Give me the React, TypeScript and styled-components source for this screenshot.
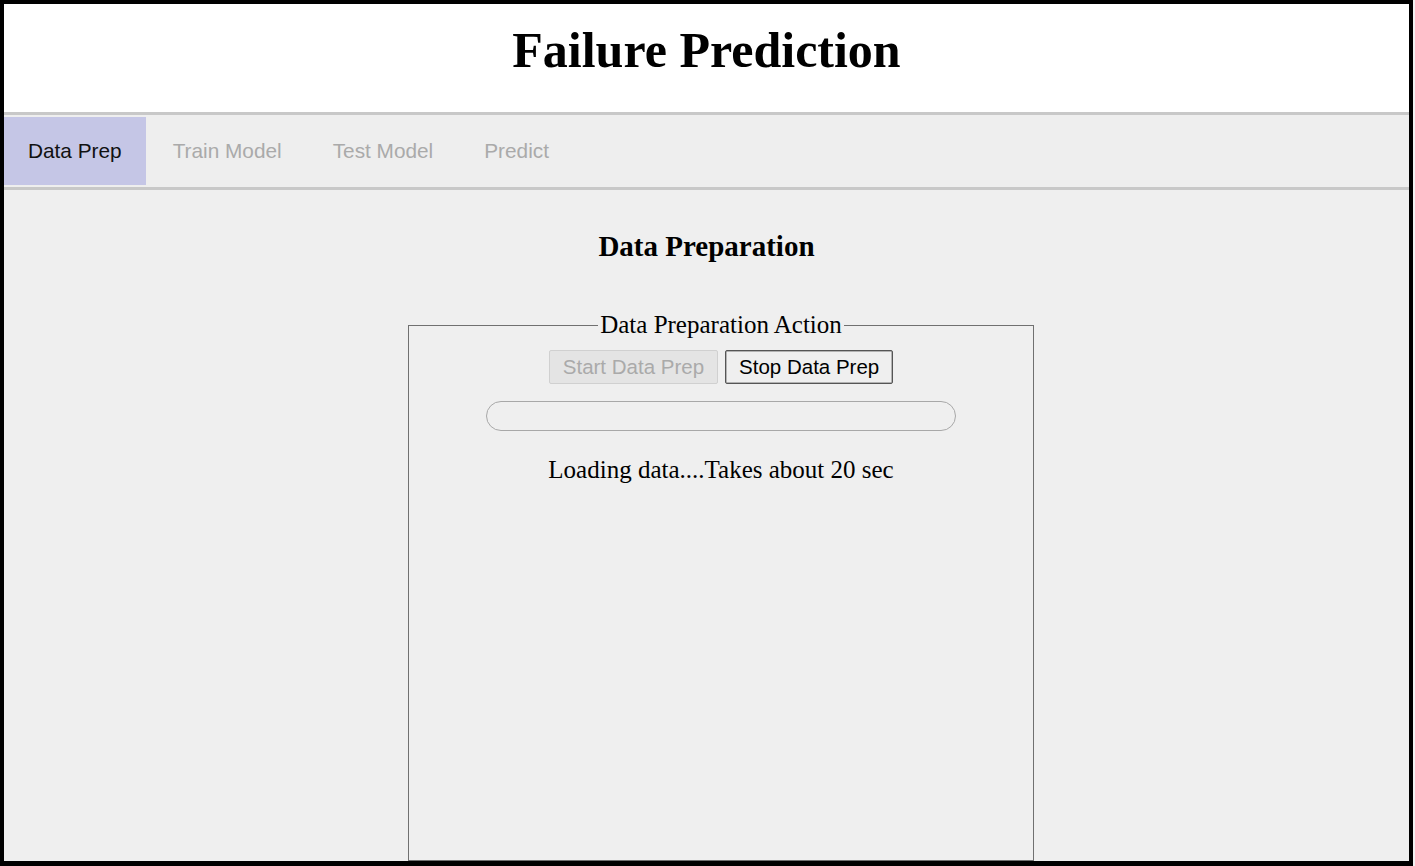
import { FC } from "react"
import styled, { createGlobalStyle } from "styled-components"

const GlobalStyle = createGlobalStyle`
  html, body {
    margin: 0;
    padding: 0;
    background: #f2f2f2;
  }
  body {
    font-family: "Liberation Serif", "Times New Roman", serif;
  }
`

const Frame = styled.div`
  box-sizing: border-box;
  width: 1413px;
  height: 866px;
  border-style: solid;
  border-color: #000;
  border-width: 4px 4px 5px 4px;
  overflow: hidden;
  display: flex;
  flex-direction: column;
  background: #efefef;
`

const Header = styled.header`
  box-sizing: border-box;
  height: 108px;
  padding-top: 17px;
  background: #fff;
  text-align: center;
`

const Title = styled.h1`
  margin: 0;
  font-size: 50px;
  font-weight: bold;
  color: #000;
`

const TabBar = styled.nav`
  box-sizing: border-box;
  height: 78px;
  display: flex;
  gap: 3px;
  padding: 2px 0;
  background: #eeeeee;
  border-top: 3px solid #c8c8c8;
  border-bottom: 3px solid #c8c8c8;
`

const Tab = styled.div<{ $active?: boolean }>`
  display: flex;
  align-items: center;
  padding: 0 24px;
  font-family: "Liberation Sans", Arial, sans-serif;
  font-size: 20.8px;
  color: ${(p) => (p.$active ? "#111" : "#aaa")};
  background: ${(p) => (p.$active ? "#c5c6e6" : "transparent")};
`

const Main = styled.main`
  flex: 1;
  display: flex;
  flex-direction: column;
  align-items: center;
  padding-top: 40px;
`

const SectionTitle = styled.h2`
  margin: 0 0 48px;
  font-size: 29px;
  font-weight: bold;
  color: #000;
`

const FieldsetRow = styled.div`
  align-self: stretch;
  display: flex;
  justify-content: center;
  padding-left: 29px;
`

const ActionBox = styled.fieldset`
  box-sizing: border-box;
  width: 626px;
  height: 550px;
  margin: 0;
  padding: 11px 12px 12px;
  border: 1px solid #707070;
  display: flex;
  flex-direction: column;
  align-items: center;
`

const Legend = styled.legend`
  margin: 0 auto;
  padding: 0 2px;
  font-size: 25px;
  color: #000;
`

const ButtonRow = styled.div`
  display: flex;
  gap: 7px;
`

const Button = styled.button`
  box-sizing: border-box;
  height: 34px;
  padding: 0 13px;
  font-family: "Liberation Sans", Arial, sans-serif;
  font-size: 20.5px;
  border-radius: 2px;
  color: #000;
  background: #efefef;
  border: 1px solid #555;
  box-shadow: inset 0 0 0 0.5px #777;

  &:disabled {
    color: #aaa;
    background: #e4e4e4;
    border-color: #d0d0d0;
    box-shadow: none;
  }
`

const Progress = styled.div`
  box-sizing: border-box;
  width: 470px;
  height: 30px;
  margin-top: 17px;
  border: 1px solid #a8a8a8;
  border-radius: 15px;
  background: #efefef;
`

const Status = styled.p`
  margin: 25px 0 0;
  font-size: 25px;
  color: #000;
`

const tabs = ["Data Prep", "Train Model", "Test Model", "Predict"]

const App: FC = () => {
  return (
    <>
      <GlobalStyle />
      <Frame>
        <Header>
          <Title>Failure Prediction</Title>
        </Header>
        <TabBar>
          {tabs.map((t, i) => (
            <Tab key={t} $active={i === 0}>
              {t}
            </Tab>
          ))}
        </TabBar>
        <Main>
          <SectionTitle>Data Preparation</SectionTitle>
          <FieldsetRow>
            <ActionBox>
              <Legend>Data Preparation Action</Legend>
              <ButtonRow>
                <Button disabled>Start Data Prep</Button>
                <Button>Stop Data Prep</Button>
              </ButtonRow>
              <Progress />
              <Status>Loading data....Takes about 20 sec</Status>
            </ActionBox>
          </FieldsetRow>
        </Main>
      </Frame>
    </>
  )
}

export default App
